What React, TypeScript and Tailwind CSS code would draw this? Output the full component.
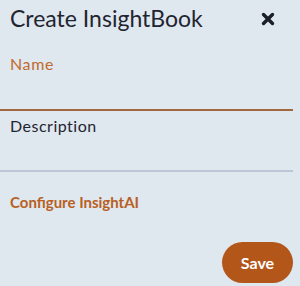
import React from "react";

const App = () => {
  return (
    <div
      className="w-[300px] h-[286px] bg-[#dfe7ef] text-[#1f2530] overflow-hidden"
      style={{ fontFamily: "Lato, 'Noto Sans', sans-serif" }}
    >
      <div className="flex items-center justify-between pl-[10px] pr-[25px] pt-[3px]">
        <h1 className="text-[23px] leading-[30px]">Create InsightBook</h1>
        <svg width="14" height="14" viewBox="0 0 14 14" className="mt-[1px]">
          <path d="M2.5 2.5 L11.5 11.5 M11.5 2.5 L2.5 11.5" stroke="#1b1f26" strokeWidth="3.4" strokeLinecap="round" />
        </svg>
      </div>

      <div className="pr-[7px] mt-[21px]">
        <label className="block pl-[10px] text-[16px] leading-[20px] tracking-[0.6px] text-[#c26a2c]">Name</label>
        <div className="h-[35px]" />
        <div className="h-[2px] bg-[#a1683f]" />
      </div>

      <div className="pr-[7px] mt-[5px]">
        <label className="block pl-[10px] text-[16px] leading-[20px] tracking-[0.5px]">Description</label>
        <div className="h-[34px]" />
        <div className="h-[2px] bg-[#bcc6d6]" />
      </div>

      <div className="mt-[20px] pl-[10px] text-[15px] leading-[20px] font-bold text-[#b8601f]">
        Configure InsightAI
      </div>

      <div className="flex justify-end pr-[7px] mt-[30px]">
        <button className="w-[71px] h-[41px] rounded-full bg-[#b3561a] text-white font-bold text-[16px]">
          Save
        </button>
      </div>
    </div>
  );
};

export default App;
